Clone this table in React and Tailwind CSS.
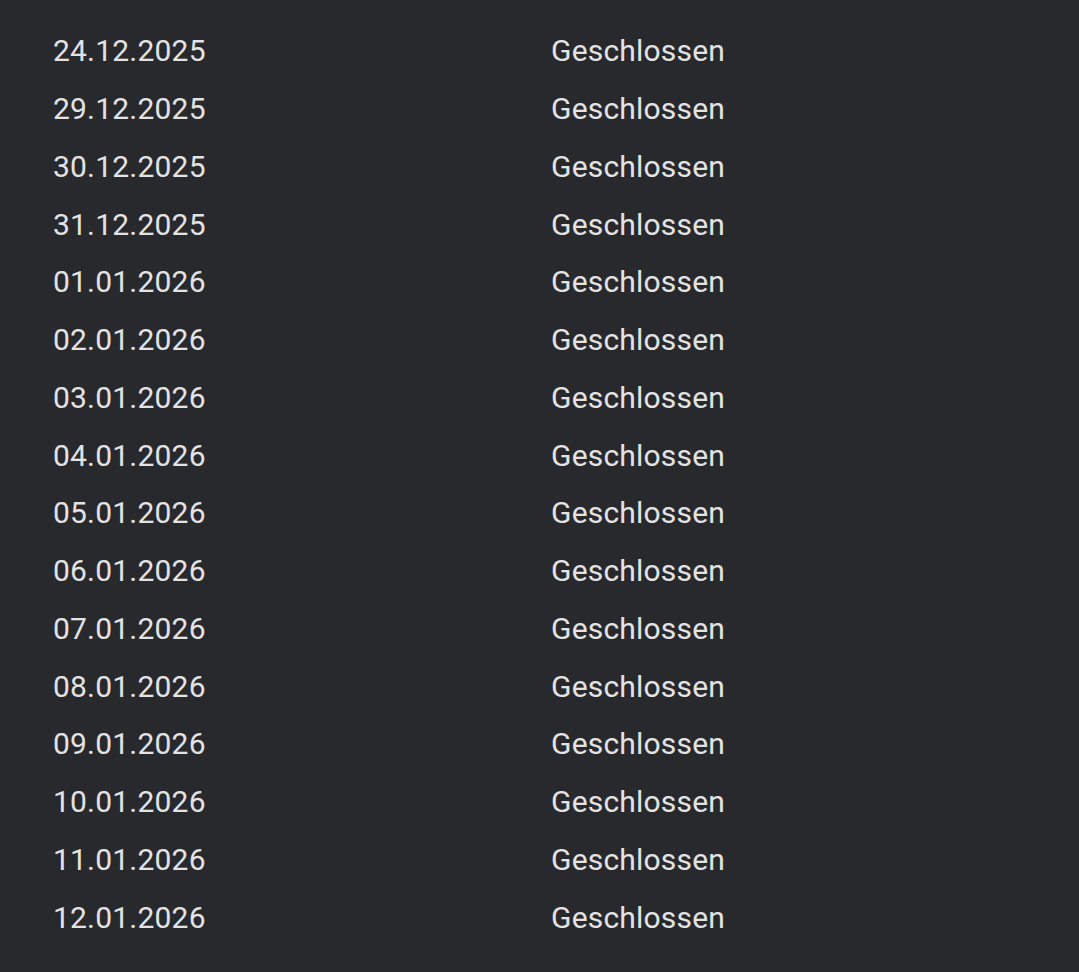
const rows = [
  "24.12.2025","29.12.2025","30.12.2025","31.12.2025","01.01.2026","02.01.2026","03.01.2026","04.01.2026",
  "05.01.2026","06.01.2026","07.01.2026","08.01.2026","09.01.2026","10.01.2026","11.01.2026","12.01.2026",
];

export default function App() {
  return (
    <div className="w-[1079px] h-[972px] bg-[#28292d] pt-[22px] pl-[53px] text-[#e3e3e3] text-[30px] tracking-[0.2px] overflow-hidden" style={{fontFamily: "Roboto, sans-serif"}}>
      {rows.map((d) => (
        <div key={d} className="flex items-center h-[57.75px]">
          <div className="w-[498px]">{d}</div>
          <div>Geschlossen</div>
        </div>
      ))}
    </div>
  );
}
